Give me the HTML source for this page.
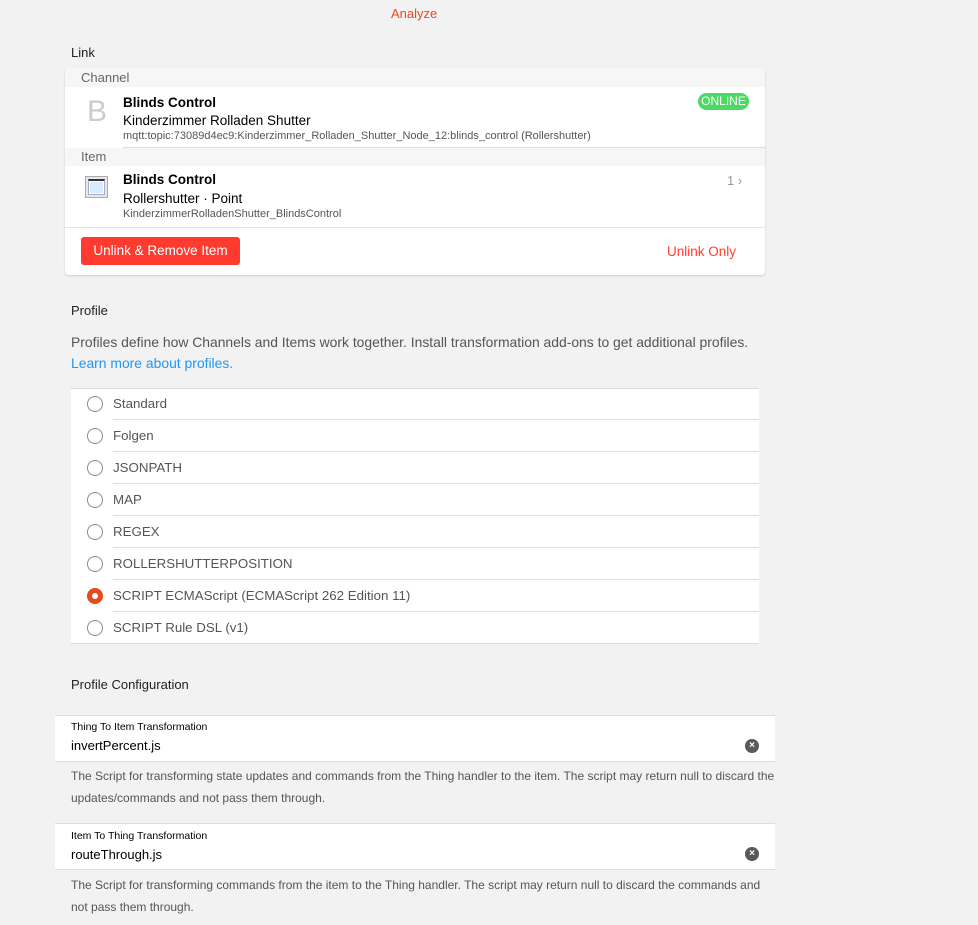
<!DOCTYPE html>
<html><head><meta charset="utf-8"><style>
*{margin:0;padding:0;box-sizing:border-box}
body{width:978px;height:925px;background:#f2f2f2;font-family:"Liberation Sans",sans-serif;position:relative;overflow:hidden;color:#000}
.a{position:absolute;white-space:nowrap}
.card{position:absolute;left:65px;top:68px;width:700px;height:207px;background:#fff;border-radius:4px;box-shadow:0 1px 2px rgba(0,0,0,.15)}
.hdr{position:absolute;left:0;width:700px;background:#f6f6f6;color:#666;font-size:13px;padding-left:16px}
.radio{position:absolute;left:87px;width:16px;height:16px;border:1.5px solid #8a8a8a;border-radius:50%}
.rlbl{position:absolute;left:113px;font-size:13.3px;color:#555}
.line{position:absolute;left:113px;width:646px;height:1px;background:#ddd}
.field{position:absolute;left:55px;width:720px;height:47px;background:#fff;border-top:1px solid #ddd;border-bottom:1px solid #ddd}
.x{position:absolute;left:745px;width:14px;height:14px;border-radius:50%;background:#5a5a5a;color:#fff;font-size:10px;line-height:14px;text-align:center;font-weight:bold}
.desc{position:absolute;left:71px;font-size:12px;color:#555;line-height:22px;white-space:nowrap}
</style></head><body>
<div class="a" style="left:391px;top:6px;font-size:13px;color:#e8491d">Analyze</div>
<div class="a" style="left:71px;top:45px;font-size:13px;color:#222">Link</div>
<div class="card">
 <div class="hdr" style="top:0;height:19px;line-height:19px;border-radius:4px 4px 0 0">Channel</div>
 <div class="a" style="left:22px;top:27px;font-size:30px;color:#ccc;font-weight:300">B</div>
 <div class="a" style="left:58px;top:27px;font-size:13.5px;font-weight:bold">Blinds Control</div>
 <div class="a" style="left:58px;top:45px;font-size:13.5px">Kinderzimmer Rolladen Shutter</div>
 <div class="a" style="left:58px;top:62px;font-size:11px;color:#555">mqtt:topic:73089d4ec9:Kinderzimmer_Rolladen_Shutter_Node_12:blinds_control (Rollershutter)</div>
 <div class="a" style="left:633px;top:25px;width:51px;height:17px;background:#4cd964;border-radius:9px;color:#fff;font-size:12px;line-height:17px;text-align:center">ONLINE</div>
 <div style="position:absolute;left:58px;top:79px;width:642px;height:1px;background:#ddd"></div>
 <div class="hdr" style="top:80px;height:18px;line-height:18px">Item</div>
 <div style="position:absolute;left:20px;top:108px;width:23px;height:22px;border:1px solid #aaa;background:#e8e8e8"><div style="position:absolute;left:2px;top:2px;width:17px;height:16px;background:#d6ecfb;border:1px solid #aac;border-top:2px solid #333;box-shadow:inset 0 0 0 1px #fff"></div></div>
 <div class="a" style="left:58px;top:104px;font-size:13.5px;font-weight:bold">Blinds Control</div>
 <div class="a" style="left:58px;top:123px;font-size:13.5px">Rollershutter · Point</div>
 <div class="a" style="left:58px;top:140px;font-size:11px;color:#555">KinderzimmerRolladenShutter_BlindsControl</div>
 <div class="a" style="left:662px;top:105px;font-size:13px;color:#999">1 &#8250;</div>
 <div style="position:absolute;left:0;top:159px;width:700px;height:1px;background:#e4e4e4"></div>
 <div class="a" style="left:16px;top:169px;width:159px;height:28px;background:#ff3b30;border-radius:3px;color:#fff;font-size:13.5px;line-height:28px;text-align:center">Unlink &amp; Remove Item</div>
 <div class="a" style="left:602px;top:176px;font-size:13.5px;color:#ff3b30">Unlink Only</div>
</div>
<div class="a" style="left:71px;top:303px;font-size:13px;color:#222">Profile</div>
<div class="a" style="left:71px;top:334px;font-size:13.9px;color:#555">Profiles define how Channels and Items work together. Install transformation add-ons to get additional profiles.</div>
<div class="a" style="left:71px;top:355px;font-size:13.9px;color:#2196f3">Learn more about profiles.</div>
<div style="position:absolute;left:71px;top:388px;width:688px;height:256px;background:#fff;border-top:1px solid #ddd;border-bottom:1px solid #ddd"></div>
<div class="radio" style="top:396px"></div><div class="rlbl" style="top:396px">Standard</div><div class="line" style="top:419px"></div>
<div class="radio" style="top:428px"></div><div class="rlbl" style="top:428px">Folgen</div><div class="line" style="top:451px"></div>
<div class="radio" style="top:460px"></div><div class="rlbl" style="top:460px">JSONPATH</div><div class="line" style="top:483px"></div>
<div class="radio" style="top:492px"></div><div class="rlbl" style="top:492px">MAP</div><div class="line" style="top:515px"></div>
<div class="radio" style="top:524px"></div><div class="rlbl" style="top:524px">REGEX</div><div class="line" style="top:547px"></div>
<div class="radio" style="top:556px"></div><div class="rlbl" style="top:556px">ROLLERSHUTTERPOSITION</div><div class="line" style="top:579px"></div>
<div class="radio" style="top:588px;border:5px solid #e8491d;background:#fff"></div><div class="rlbl" style="top:588px">SCRIPT ECMAScript (ECMAScript 262 Edition 11)</div><div class="line" style="top:611px"></div>
<div class="radio" style="top:620px"></div><div class="rlbl" style="top:620px">SCRIPT Rule DSL (v1)</div>
<div class="a" style="left:71px;top:677px;font-size:13px;color:#222">Profile Configuration</div>
<div class="field" style="top:715px"></div>
<div class="a" style="left:71px;top:721px;font-size:10.5px">Thing To Item Transformation</div>
<div class="a" style="left:71px;top:738px;font-size:13px">invertPercent.js</div>
<div class="x" style="top:739px">×</div>
<div class="desc" style="top:765px">The Script for transforming state updates and commands from the Thing handler to the item. The script may return null to discard the<br>updates/commands and not pass them through.</div>
<div class="field" style="top:823px"></div>
<div class="a" style="left:71px;top:830px;font-size:10.5px">Item To Thing Transformation</div>
<div class="a" style="left:71px;top:847px;font-size:13px">routeThrough.js</div>
<div class="x" style="top:847px">×</div>
<div class="desc" style="top:874px">The Script for transforming commands from the item to the Thing handler. The script may return null to discard the commands and<br>not pass them through.</div>
</body></html>
